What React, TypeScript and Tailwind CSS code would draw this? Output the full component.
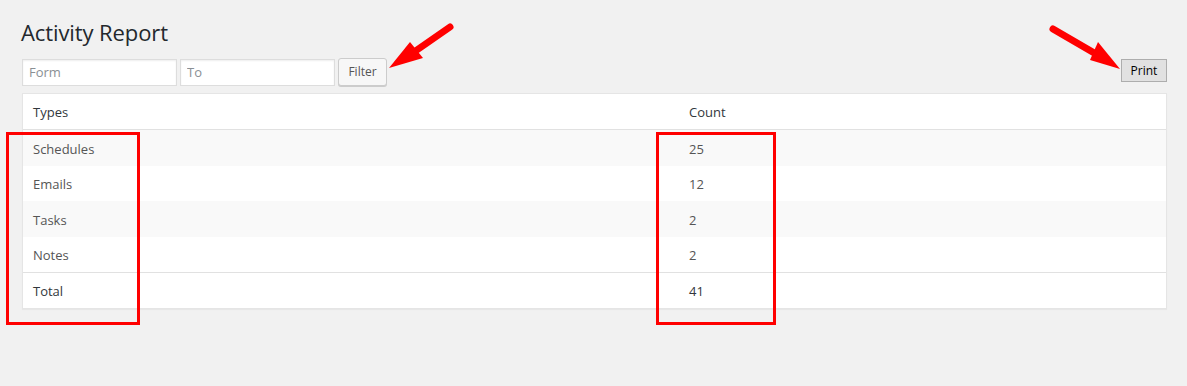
export default function App() {
  const rows = [
    { type: "Schedules", count: 25 },
    { type: "Emails", count: 12 },
    { type: "Tasks", count: 2 },
    { type: "Notes", count: 2 },
  ];

  return (
    <div className="relative min-h-[386px] w-[1187px] bg-[#f1f1f1] pl-[22px] pr-[20px] pt-[18px] font-['Open_Sans',_'Noto_Sans',_sans-serif] text-[#444]">
      <h1 className="-ml-[1px] text-[22px] leading-[29px] font-normal tracking-[-0.1px] text-[#23282d]">Activity Report</h1>

      <div className="mt-[11px] flex items-end justify-between">
        <div className="flex items-center gap-[3px]">
          <input
            placeholder="Form"
            className="h-[27px] w-[155px] border border-[#ddd] bg-white px-[6px] text-[13px] text-[#32373c] shadow-[inset_0_1px_2px_rgba(0,0,0,0.07)] outline-none placeholder:text-[#8a8f94]"
          />
          <input
            placeholder="To"
            className="h-[27px] w-[155px] border border-[#ddd] bg-white px-[6px] text-[13px] text-[#32373c] shadow-[inset_0_1px_2px_rgba(0,0,0,0.07)] outline-none placeholder:text-[#8a8f94]"
          />
          <button className="h-[28px] w-[49px] rounded-[3px] border border-[#ccc] bg-[#f7f7f7] text-[12px] text-[#555] shadow-[0_1px_0_#ccc]">
            Filter
          </button>
        </div>
        <button className="mb-[4px] h-[23px] w-[46px] border border-[#adadad] bg-[#e1e1e1] text-[12px] text-black">
          Print
        </button>
      </div>

      <div className="mt-[7px] w-[1145px] border border-[#e5e5e5] bg-white text-[13px] shadow-[0_1px_1px_rgba(0,0,0,0.04)]">
        <div className="grid h-[36px] grid-cols-[656px_1fr] items-center border-b border-[#e1e1e1] pt-[3px] text-[#32373c]">
          <div className="pl-[10px]">Types</div>
          <div className="pl-[10px]">Count</div>
        </div>
        {rows.map((r, i) => (
          <div
            key={r.type}
            className={
              i % 2 === 0
                ? "grid h-[35.5px] grid-cols-[656px_1fr] items-center bg-[#f9f9f9] pt-[3px] text-[#555]"
                : "grid h-[35.5px] grid-cols-[656px_1fr] items-center bg-white pt-[3px] text-[#555]"
            }
          >
            <div className="pl-[10px]">{r.type}</div>
            <div className="pl-[10px]">{r.count}</div>
          </div>
        ))}
        <div className="grid h-[36px] grid-cols-[656px_1fr] items-center border-t border-[#e1e1e1] pt-[3px] text-[#32373c]">
          <div className="pl-[10px]">Total</div>
          <div className="pl-[10px]">41</div>
        </div>
      </div>

      {/* annotation overlay */}
      <svg className="pointer-events-none absolute left-0 top-0" width="1187" height="386">
        <rect x="7.5" y="133.5" width="131" height="190" fill="none" stroke="#ff0000" strokeWidth="3" />
        <rect x="657.5" y="133.5" width="117" height="190" fill="none" stroke="#ff0000" strokeWidth="3" />
        <line x1="450" y1="27" x2="414" y2="52" stroke="#ff0000" strokeWidth="7" strokeLinecap="round" />
        <polygon points="389,68 410,42 423,58" fill="#ff0000" />
        <line x1="1053" y1="29" x2="1096" y2="54" stroke="#ff0000" strokeWidth="7" strokeLinecap="round" />
        <polygon points="1120,69 1098,42 1090,60" fill="#ff0000" />
      </svg>
    </div>
  );
}
